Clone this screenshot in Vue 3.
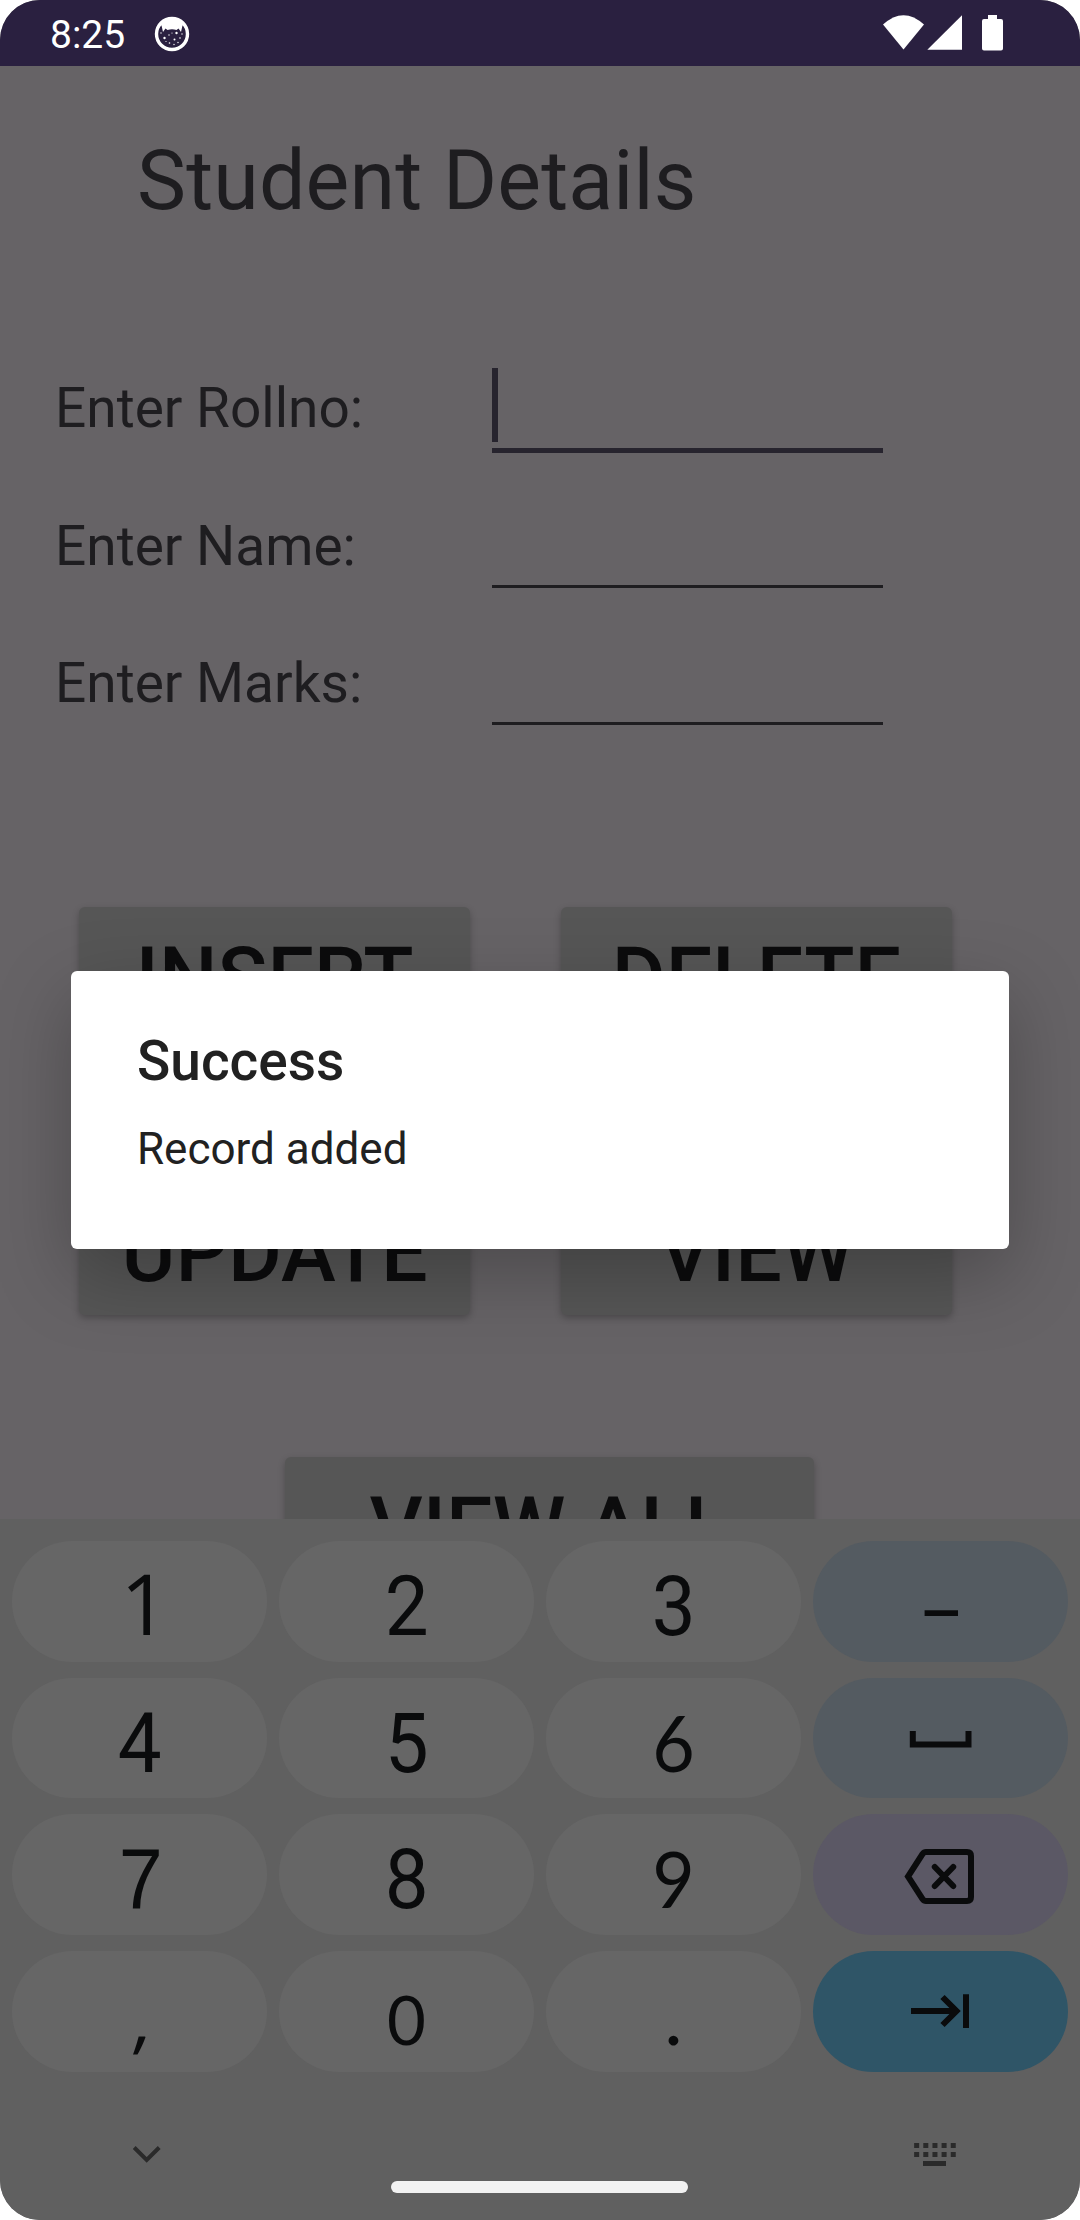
<script setup>
const fields = [
  { label: 'Enter Rollno:', focused: true },
  { label: 'Enter Name:', focused: false },
  { label: 'Enter Marks:', focused: false },
]
const actions = ['INSERT', 'DELETE', 'UPDATE', 'VIEW']
const keyRows = [
  [
    { text: '1', face: 'one' },
    { text: '2', face: 'plain' },
    { text: '3', face: 'plain' },
    { text: '–', face: 'dash', tone: 'blue' },
  ],
  [
    { text: '4', face: 'plain' },
    { text: '5', face: 'plain' },
    { text: '6', face: 'round' },
    { icon: 'space', tone: 'blue' },
  ],
  [
    { text: '7', face: 'curved' },
    { text: '8', face: 'plain' },
    { text: '9', face: 'round' },
    { icon: 'backspace', tone: 'purple' },
  ],
  [
    { text: ',', face: 'comma' },
    { text: '0', face: 'zero' },
    { text: '.', face: 'dot' },
    { icon: 'next', tone: 'teal' },
  ],
]
</script>

<template>
  <div class="screen">
    <header class="status">
      <span class="clock">8:25</span>
      <svg class="badge" width="36" height="36" viewBox="0 0 36 36">
        <circle cx="18" cy="18" r="15.5" fill="none" stroke="#fff" stroke-width="3.4" />
        <path d="M5 9 Q18 -6 31 9 L28.500 9.500 L27 16 L24.500 12.500 L22.500 14 Q18 12.500 13.500 14 L11.500 12.500 L9 16 L7.500 9.500 Z" fill="#fff" />
        <g fill="#fff">
          <circle cx="10.500" cy="22" r="1.200" /><circle cx="20.500" cy="23.500" r="1" />
          <circle cx="22.500" cy="17" r="1.200" /><circle cx="15" cy="19" r=".7" />
          <circle cx="26" cy="22" r=".8" /><circle cx="15.500" cy="27" r=".8" />
          <circle cx="7" cy="17" r=".7" /><circle cx="28" cy="18" r=".7" />
          <circle cx="20" cy="28.500" r=".7" /><circle cx="24" cy="26.500" r=".7" />
          <circle cx="18" cy="17" r=".6" /><circle cx="12" cy="25.500" r=".6" />
        </g>
      </svg>
      <svg class="signals" width="124" height="40" viewBox="880 13 124 40" fill="#fff">
        <path d="M883 24.500 Q903.500 5.800 924 24.500 L903.500 49.500 Z" />
        <path d="M927.300 49.800 L962 15.300 V49.800 Z" />
        <path d="M988 15 h9 v4 h4 q2 0 2 2 v27.500 q0 2-2 2 h-17 q-2 0-2-2 v-27.500 q0-2 2-2 h4 z" />
      </svg>
    </header>

    <main class="content">
      <h1>Student Details</h1>
      <form class="form">
        <div v-for="f in fields" :key="f.label" class="row">
          <label>{{ f.label }}</label>
          <div class="field" :class="{ focused: f.focused }"><i v-if="f.focused" class="caret"></i></div>
        </div>
      </form>
      <div class="actions">
        <button v-for="a in actions" :key="a">{{ a }}</button>
      </div>
      <button class="all">VIEW ALL</button>
    </main>

    <section class="keyboard">
      <div class="keys">
        <div v-for="(row, i) in keyRows" :key="i" class="key-row">
          <div v-for="(k, j) in row" :key="j" class="key" :class="k.tone">
            <span v-if="k.text" :class="k.face">{{ k.text }}</span>
            <svg v-else-if="k.icon === 'space'" width="255" height="120" viewBox="813 1678 255 120">
              <path d="M912.800 1731 V1744.500 H968.500 V1731" />
            </svg>
            <svg v-else-if="k.icon === 'backspace'" width="255" height="120" viewBox="813 1815 255 120">
              <path d="M926 1853 H967 Q971 1853 971 1857 V1898 Q971 1902 967 1902 H926 Q924 1902 922.500 1900 L908 1877.500 L922.500 1855 Q924 1853 926 1853 Z" />
              <path d="M934.800 1868 L953.200 1887 M953.200 1868 L934.800 1887" stroke-linecap="round" />
            </svg>
            <svg v-else width="255" height="120" viewBox="813 1951 255 120">
              <path d="M911 2011 H956 M942.500 1997 L956.500 2011 L942.500 2025 M966 1994.200 V2028" />
            </svg>
          </div>
        </div>
      </div>
      <div class="tools">
        <svg width="30" height="20" viewBox="132 2145 30 20">
          <path d="M134.200 2147.500 L146.700 2160 L159.200 2147.500" fill="none" stroke="#2a2a2a" stroke-width="4" />
        </svg>
        <svg width="42" height="24" viewBox="914 2143 42 24" fill="#2a2a2a">
          <template v-for="n in 5" :key="n">
            <rect :x="905 + n * 9.15" y="2143" width="5" height="5" />
            <rect :x="905 + n * 9.15" y="2152" width="5" height="5" />
          </template>
          <rect x="923" y="2161" width="23" height="5" />
        </svg>
      </div>
      <div class="home"></div>
    </section>

    <div class="dialog" role="dialog">
      <h2>Success</h2>
      <p>Record added</p>
    </div>
  </div>
</template>

<style>
body { margin: 0; background: #fff; }
</style>

<style scoped>
.screen {
  position: relative;
  display: flex;
  flex-direction: column;
  width: 1080px;
  height: 2220px;
  overflow: hidden;
  border-radius: 40px;
  background: #666366;
  font-family: Roboto, "Liberation Sans", sans-serif;
  color: #1e1d20;
}
.status {
  display: flex;
  align-items: center;
  flex: none;
  box-sizing: border-box;
  height: 66px;
  padding: 0 76px 0 50px;
  background: #2a2040;
  color: #fff;
}
.clock { width: 103.500px; font-size: 39px; line-height: 46px; padding-top: 3px; }
.badge { margin-top: 1px; }
.signals { margin-left: auto; }
.content { height: 1453px; flex: none; overflow: hidden; }
h1 {
  margin: 66px 0 0 137px;
  font-size: 82.5px;
  line-height: 97px;
  font-weight: 400;
  letter-spacing: .15px;
}
.form { height: 412px; margin: 131px 0 0; padding-left: 55px; }
.row { display: flex; align-items: flex-start; height: 137.500px; }
label { width: 437px; margin-top: 16px; font-size: 55px; line-height: 64px; }
.field {
  box-sizing: border-box;
  width: 391px;
  height: 90px;
  border-bottom: 3px solid #1e1d20;
}
.field.focused { height: 93px; padding-top: 8px; border-bottom: 5px solid #27242e; }
.caret { display: block; width: 6px; height: 74px; background: #27242e; }
.actions {
  display: grid;
  grid-template-columns: 391px 391px;
  gap: 142px 91px;
  margin: 135px 0 0 79px;
}
button {
  box-sizing: border-box;
  height: 133px;
  padding: 8px 0 0;
  border: 0;
  border-radius: 6px;
  background: #565656;
  box-shadow: 0 3px 7px rgba(0, 0, 0, .25);
  color: #0c0c0d;
  font: 500 82.5px/97px Roboto, sans-serif;
  text-align: center;
  white-space: nowrap;
}
.all { display: block; width: 529px; margin: 142px 0 0 285px; }
.keyboard {
  display: flex;
  flex-direction: column;
  box-sizing: border-box;
  height: 701px;
  flex: none;
  padding-top: 22px;
  background: #606060;
}
.keys { display: flex; flex-direction: column; gap: 16px; padding: 0 12px; }
.key-row { display: flex; gap: 12px; }
.key {
  box-sizing: border-box;
  width: 255px;
  height: 120.700px;
  overflow: hidden;
  border-radius: 61px;
  padding-top: 6px;
  background: #666;
  color: #0a0b0c;
  font-size: 84px;
  line-height: 120px;
  text-align: center;
}
.key.blue { background: #545b61; }
.key.purple { background: #5b5865; }
.key.teal { background: #2f5567; }
.key span { display: inline-block; line-height: 0; }
.key svg {
  display: block;
  margin-top: -6px;
  fill: none;
  stroke: #0a0b0c;
  stroke-width: 6;
}
.plain { transform: scaleX(.93); }
.one { padding-left: 10px; font-family: "Open Sans", sans-serif; }
.round { font-family: Lato, sans-serif; font-size: 78px; transform: scaleX(.94); }
.curved { padding-left: 2px; font-family: "Liberation Sans", sans-serif; font-size: 86px; transform: scaleX(.92); }
.comma { padding-left: 8px; font-family: "Open Sans", sans-serif; font-size: 74px; transform: skewX(-6deg); }
.zero { font-family: Lato, sans-serif; font-size: 67px; }
.dot { font-family: Lato, sans-serif; font-size: 78px; }
.dash { font-size: 62px; font-weight: 500; transform: scaleX(1.08); }
.tools {
  display: flex;
  justify-content: space-between;
  align-items: center;
  height: 24px;
  margin-top: 71.400px;
  padding: 0 124px 0 132px;
}
.home {
  width: 297px;
  height: 12px;
  margin: 14px 0 0 391px;
  border-radius: 6px;
  background: #f2f2f2;
}
.dialog {
  position: absolute;
  left: 71px;
  top: 971px;
  box-sizing: border-box;
  width: 938px;
  height: 278px;
  padding: 58px 66px 0;
  border-radius: 6px;
  background: #fff;
  box-shadow: 0 26px 76px rgba(0, 0, 0, .25);
  color: #212121;
}
h2 { margin: 0; font-size: 55px; line-height: 64px; font-weight: 500; }
p { margin: 30px 0 0; font-size: 44px; line-height: 52px; }
</style>
